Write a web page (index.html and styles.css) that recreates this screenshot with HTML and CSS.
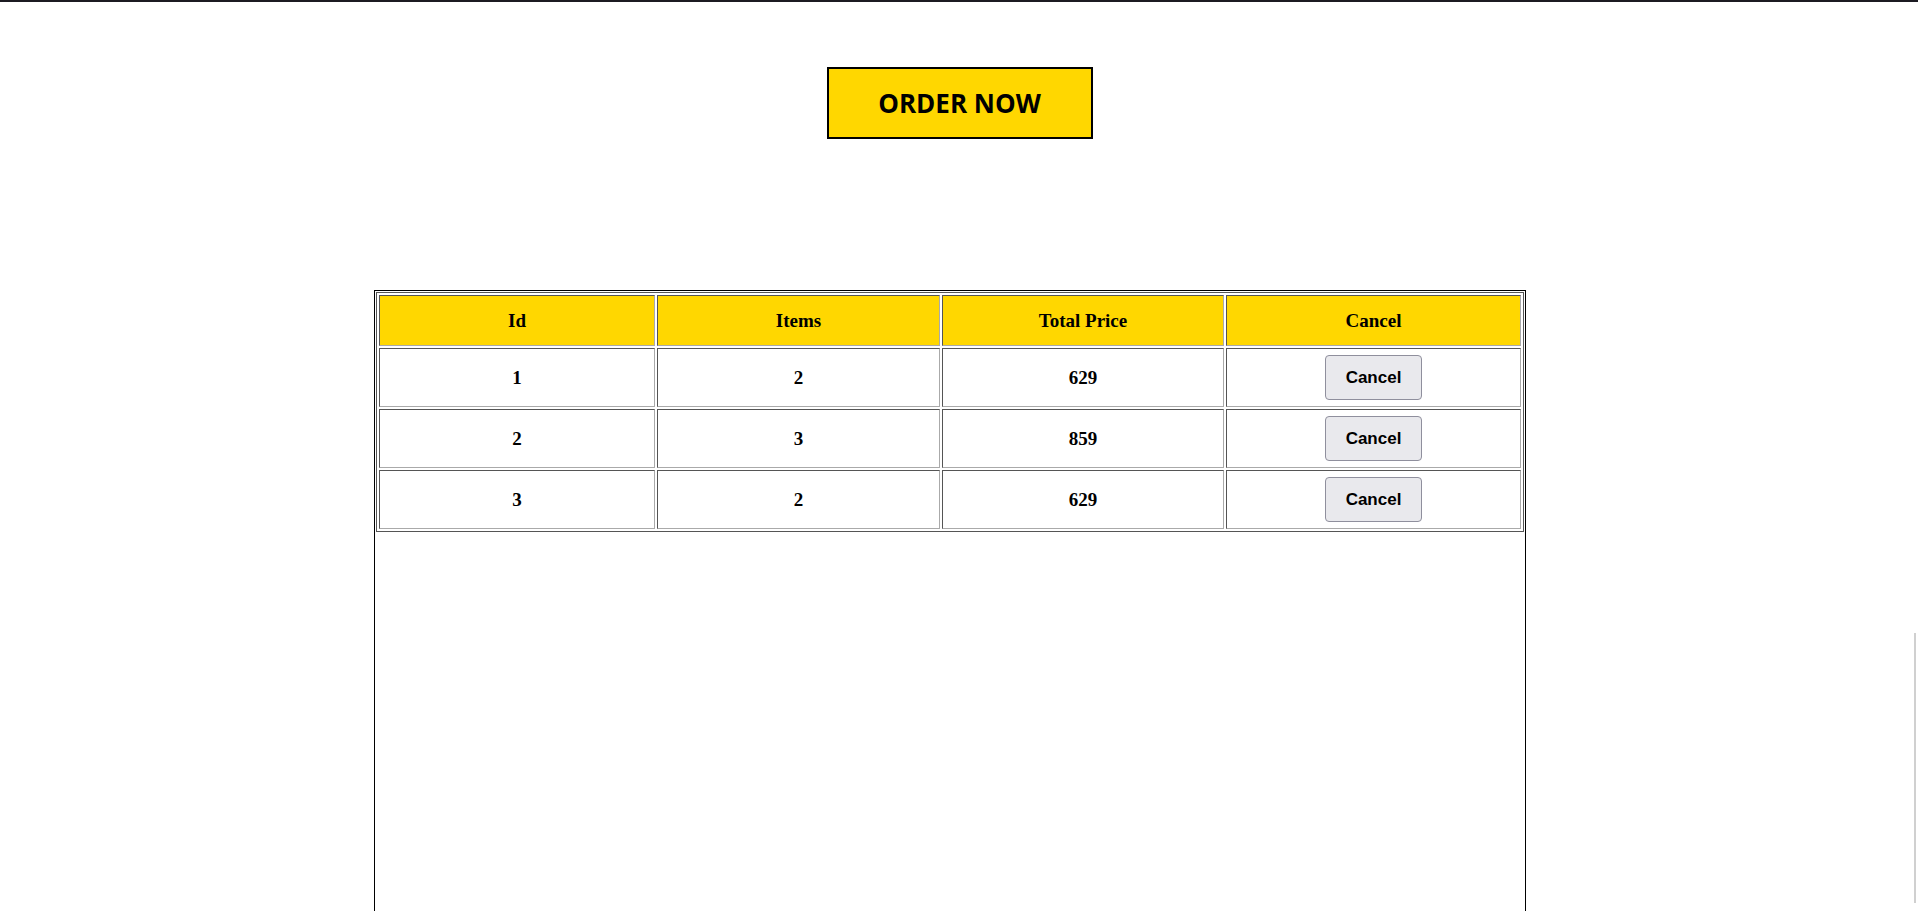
FILE: index.html
```html
<!DOCTYPE html>
<html lang="en">
<head>
<meta charset="utf-8">
<title>Orders</title>
<link rel="stylesheet" href="styles.css">
</head>
<body>
<div class="topbar"></div>
<div class="hero">
  <button class="order-btn" type="button">ORDER NOW</button>
</div>
<div class="orders">
  <table class="orders-table">
    <colgroup>
      <col class="c-id">
      <col class="c-items">
      <col class="c-price">
      <col class="c-cancel">
    </colgroup>
    <thead>
      <tr>
        <th>Id</th>
        <th>Items</th>
        <th>Total Price</th>
        <th>Cancel</th>
      </tr>
    </thead>
    <tbody>
      <tr>
        <td>1</td>
        <td>2</td>
        <td>629</td>
        <td><button class="cancel-btn" type="button">Cancel</button></td>
      </tr>
      <tr>
        <td>2</td>
        <td>3</td>
        <td>859</td>
        <td><button class="cancel-btn" type="button">Cancel</button></td>
      </tr>
      <tr>
        <td>3</td>
        <td>2</td>
        <td>629</td>
        <td><button class="cancel-btn" type="button">Cancel</button></td>
      </tr>
    </tbody>
  </table>
</div>
<div class="scroll-thumb"></div>
</body>
</html>
```

FILE: styles.css
```css
html, body {
  margin: 0;
  padding: 0;
  overflow: hidden;
  background: #ffffff;
  font-family: "Liberation Serif", "Times New Roman", serif;
}

.topbar {
  height: 2px;
  background: #1c1b22;
}

.hero {
  display: flex;
  justify-content: center;
  padding-top: 65px;
  padding-left: 1px;
}

.order-btn {
  box-sizing: border-box;
  width: 266px;
  height: 72px;
  background: #ffd700;
  border: 2px solid #000000;
  border-radius: 0;
  color: #000000;
  font-family: "Open Sans", "Noto Sans", sans-serif;
  font-weight: 700;
  font-size: 26px;
  padding: 0;
  margin: 0;
  cursor: pointer;
}

.orders {
  box-sizing: border-box;
  margin-top: 151px;
  margin-left: 374px;
  width: 1152px;
  height: 630px;
  border: 1px solid #000000;
  border-bottom: none;
  padding: 1px;
}

.orders-table {
  width: 100%;
  border-collapse: separate;
  border-spacing: 2px;
  border: 1px solid #555555;
  table-layout: fixed;
  font-weight: 700;
  font-size: 19px;
  color: #000000;
}

.c-id { width: 276px; }
.c-items { width: 283px; }
.c-price { width: 282px; }
.c-cancel { width: 295px; }

.orders-table th,
.orders-table td {
  border: 1px solid;
  border-color: #555555 #aaaaaa #aaaaaa #555555;
  text-align: center;
  vertical-align: middle;
  line-height: 22px;
}

.orders-table th {
  background: #ffd700;
  padding: 14px 0 13px;
}

.orders-table td {
  padding: 6px 0;
  height: 45px;
  box-sizing: content-box;
}

.cancel-btn {
  box-sizing: border-box;
  width: 97px;
  height: 45px;
  background: #e9e9ed;
  border: 1px solid #8f8f9d;
  border-radius: 4px;
  color: #000000;
  font-family: "Liberation Sans", Arial, sans-serif;
  font-weight: 700;
  font-size: 17px;
  padding: 0;
  display: block;
  margin: 0 auto;
}

.scroll-thumb {
  position: fixed;
  right: 2px;
  top: 633px;
  width: 2px;
  height: 270px;
  background: #d0d0d0;
}
```
